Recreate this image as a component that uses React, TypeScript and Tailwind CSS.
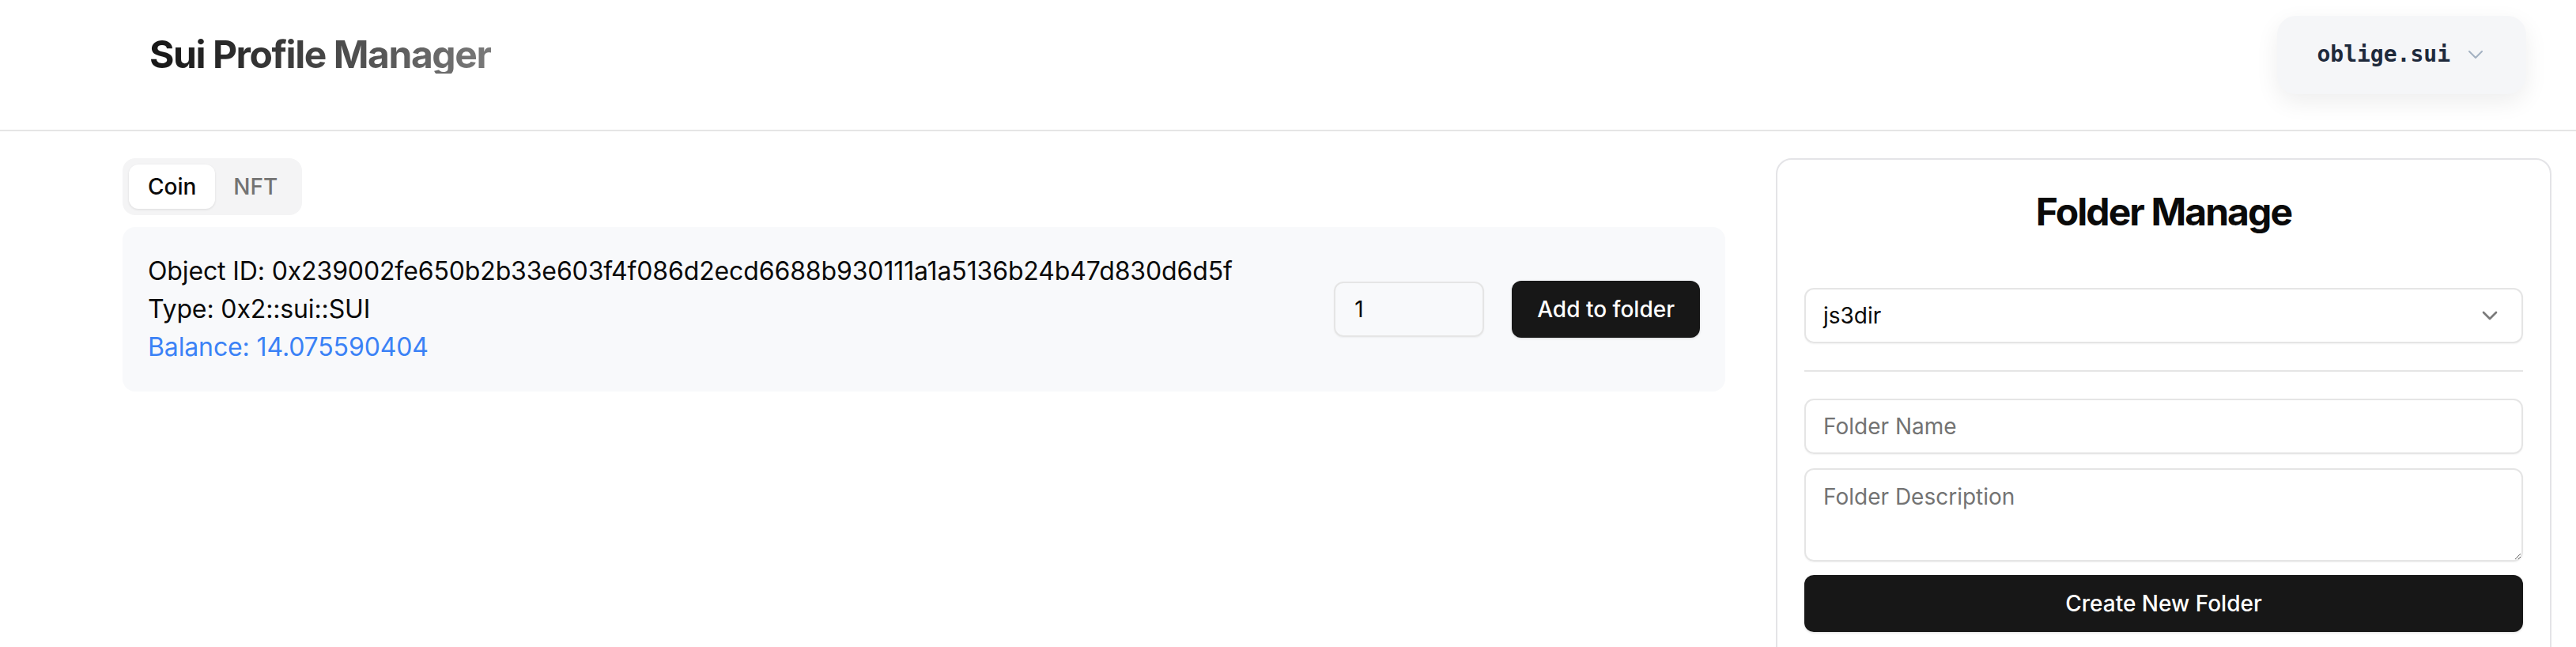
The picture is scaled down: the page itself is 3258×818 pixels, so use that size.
import React from "react";

function ChevronSmall() {
  return (
    <svg width="18" height="10" viewBox="0 0 18 10" fill="none">
      <path d="M1 1 L9 9 L17 1" stroke="#a3b1c2" strokeWidth="2" strokeLinecap="round" strokeLinejoin="round" />
    </svg>
  );
}

function ChevronSelect() {
  return (
    <svg width="32" height="32" viewBox="0 0 24 24" fill="none">
      <path d="m6 9 6 6 6-6" stroke="#7a7a7a" strokeWidth="2" strokeLinecap="round" strokeLinejoin="round" />
    </svg>
  );
}

export default function App() {
  return (
    <div className="min-h-screen bg-white font-['Inter',sans-serif] text-[#0a0a0a]">
      <header className="h-[166px] border-b-2 border-[#e5e5e5] pl-[189px] pr-[63px] pb-[26px] flex items-center justify-between">
        <h1 className="text-[48px] font-bold leading-none tracking-[-0.03em] bg-linear-to-r from-[#161616] to-[#7a7a7a] bg-clip-text text-transparent">
          Sui Profile Manager
        </h1>
        <button className="h-[99px] pl-[50px] pr-[55px] rounded-[24px] bg-[#f5f6f8] flex items-center gap-[23px] shadow-[0_10px_30px_rgba(0,0,0,0.07)]">
          <span className="font-['DejaVu_Sans_Mono',monospace] text-[28px] font-bold text-[#1e293b]">oblige.sui</span>
          <ChevronSmall />
        </button>
      </header>

      <main className="flex items-start pl-[155px] pr-[31px] pt-[34px] gap-[64px]">
        <div className="flex-1 min-w-0">
          <div className="inline-flex p-[8px] bg-[#f4f4f5] rounded-[16px]">
            <button className="h-[56px] px-[24px] rounded-[12px] bg-white text-[28px] font-medium text-[#0a0a0a] shadow-[0_1px_3px_rgba(0,0,0,0.1)]">
              Coin
            </button>
            <button className="h-[56px] px-[23px] rounded-[12px] text-[28px] font-medium text-[#737373]">
              NFT
            </button>
          </div>

          <div className="mt-[15px] bg-[#f8f9fb] rounded-[16px] p-[32px] flex items-center justify-between">
            <div className="text-[32px] leading-[48px] tracking-[-0.004em]">
              <div>Object ID: 0x239002fe650b2b33e603f4f086d2ecd6688b930111a1a5136b24b47d830d6d5f</div>
              <div>Type: 0x2::sui::SUI</div>
              <div className="text-[#3b82f6]">Balance: 14.075590404</div>
            </div>
            <div className="flex items-center gap-[35px]">
              <input
                defaultValue="1"
                className="w-[190px] h-[70px] rounded-[12px] border-2 border-[#e5e5e5] bg-transparent px-[24px] text-[28px] outline-none shadow-[0_1px_2px_rgba(0,0,0,0.05)]"
              />
              <button className="h-[72px] px-[32px] rounded-[12px] bg-[#171717] text-white text-[28px] font-medium shadow-[0_1px_3px_rgba(0,0,0,0.15)]">
                Add to folder
              </button>
            </div>
          </div>
        </div>

        <div className="w-[981px] shrink-0 border-2 border-[#e4e4e7] rounded-[20px] bg-white p-[34px]">
          <h2 className="text-center text-[48px] font-bold leading-[64px] tracking-[-0.04em] text-[#0a0a0a] mb-[64px]">
            Folder Manage
          </h2>
          <div className="h-[70px] rounded-[12px] border-2 border-[#e5e5e5] pl-[22px] pr-[24px] flex items-center justify-between text-[28px] shadow-[0_1px_2px_rgba(0,0,0,0.05)]">
            <span>js3dir</span>
            <ChevronSelect />
          </div>
          <div className="my-[34px] h-[2px] bg-[#e5e5e5]" />
          <div className="flex flex-col">
            <input
              placeholder="Folder Name"
              className="h-[70px] rounded-[12px] border-2 border-[#e5e5e5] bg-transparent px-[22px] text-[28px] outline-none placeholder:text-[#737373] shadow-[0_1px_2px_rgba(0,0,0,0.05)]"
            />
            <textarea
              placeholder="Folder Description"
              className="mt-[18px] h-[118px] rounded-[12px] border-2 border-[#e5e5e5] bg-transparent px-[22px] py-[14px] text-[28px] leading-[40px] outline-none placeholder:text-[#737373] shadow-[0_1px_2px_rgba(0,0,0,0.05)]"
            />
            <button className="mt-[17px] h-[72px] w-full rounded-[12px] bg-[#171717] text-white text-[28px] font-medium shadow-[0_1px_3px_rgba(0,0,0,0.15)]">
              Create New Folder
            </button>
          </div>
          <div className="h-[40px]" />
        </div>
      </main>
    </div>
  );
}
